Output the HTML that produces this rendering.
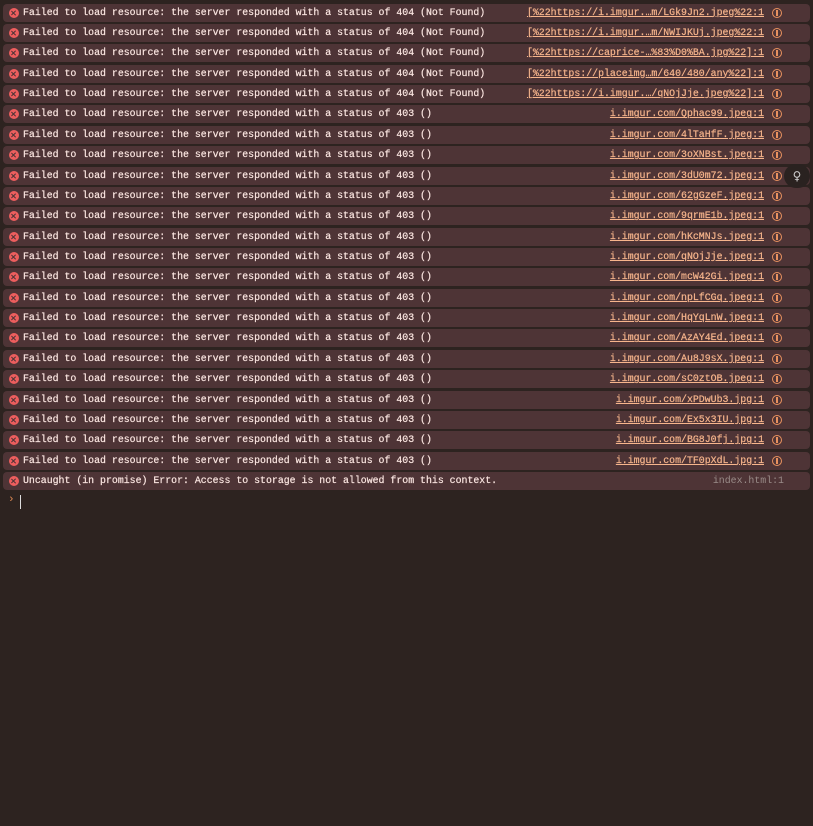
<!DOCTYPE html>
<html><head><meta charset="utf-8"><style>
html,body{margin:0;padding:0;background:#2d2320;width:813px;height:826px;overflow:hidden}
.r{position:absolute;left:3px;width:807px;height:18px;background:#4e3436;border-radius:4px;font-family:"Liberation Mono",monospace;font-size:9.9px;line-height:18px;color:#fbe6e1;white-space:pre;-webkit-text-stroke:0.2px #fbe6e1}
.r .t{position:absolute;left:20px;top:0}
.r .x{position:absolute;left:6px;top:4px;width:10px;height:10px;border-radius:50%;background:#ed5e5e}
.r .x:before,.r .x:after{content:"";position:absolute;left:4.4px;top:2px;width:1.3px;height:6px;background:#4e3436;transform:rotate(45deg)}
.r .x:after{transform:rotate(-45deg)}
.r .l{position:absolute;right:46px;top:0;color:#f7b58c;-webkit-text-stroke:0.2px #f7b58c;text-decoration:underline}
.r .g{position:absolute;right:28px;top:4px;width:8px;height:8px;border:1.3px solid #e8915f;border-radius:50%}
.r .g:before{content:"";position:absolute;left:3.3px;top:1px;width:1.3px;height:6px;background:#e8915f}
.r .i{position:absolute;right:46px;top:0;color:#9a8c89;-webkit-text-stroke:0}
.p{position:absolute;left:8px;top:494px;color:#e08a55;font-family:"Liberation Mono",monospace;font-size:11px}
.c{position:absolute;left:20px;top:495px;width:1px;height:14px;background:#ddd}
.h{position:absolute;left:784px;top:164px;width:26px;height:24px;border-radius:12px;background:#2a2220;color:#ccc;font-size:12px;text-align:center;line-height:24px;font-family:"DejaVu Sans",sans-serif}
</style></head><body>
<div id="w"></div>
<div class="p">›</div><div class="c"></div>
<div class="h">♀</div>
<script>
var a="Failed to load resource: the server responded with a status of 404 (Not Found)";
var b="Failed to load resource: the server responded with a status of 403 ()";
var rows=[[a,"[%22https://i.imgur.…m/LGk9Jn2.jpeg%22:1"],[a,"[%22https://i.imgur.…m/NWIJKUj.jpeg%22:1"],[a,"[%22https://caprice-…%83%D0%BA.jpg%22]:1"],[a,"[%22https://placeimg…m/640/480/any%22]:1"],[a,"[%22https://i.imgur.…/qNOjJje.jpeg%22]:1"],
[b,"i.imgur.com/Qphac99.jpeg:1"],[b,"i.imgur.com/4lTaHfF.jpeg:1"],[b,"i.imgur.com/3oXNBst.jpeg:1"],[b,"i.imgur.com/3dU0m72.jpeg:1"],[b,"i.imgur.com/62gGzeF.jpeg:1"],[b,"i.imgur.com/9qrmE1b.jpeg:1"],[b,"i.imgur.com/hKcMNJs.jpeg:1"],[b,"i.imgur.com/qNOjJje.jpeg:1"],[b,"i.imgur.com/mcW42Gi.jpeg:1"],[b,"i.imgur.com/npLfCGq.jpeg:1"],[b,"i.imgur.com/HqYqLnW.jpeg:1"],[b,"i.imgur.com/AzAY4Ed.jpeg:1"],[b,"i.imgur.com/Au8J9sX.jpeg:1"],[b,"i.imgur.com/sC0ztOB.jpeg:1"],[b,"i.imgur.com/xPDwUb3.jpg:1"],[b,"i.imgur.com/Ex5x3IU.jpg:1"],[b,"i.imgur.com/BG8J0fj.jpg:1"],[b,"i.imgur.com/TF0pXdL.jpg:1"]];
var h="";
for(var i=0;i<rows.length;i++){h+='<div class="r" style="top:'+(3.5+i*20.37).toFixed(1)+'px"><span class="x"></span><span class="t">'+rows[i][0]+'</span><span class="l">'+rows[i][1]+'</span><span class="g"></span></div>';}
h+='<div class="r" style="top:'+(3.5+23*20.37).toFixed(1)+'px"><span class="x"></span><span class="t">Uncaught (in promise) Error: Access to storage is not allowed from this context.</span><span class="i" style="right:26px">index.html:1</span></div>';
document.getElementById("w").innerHTML=h;
</script>
</body></html>
